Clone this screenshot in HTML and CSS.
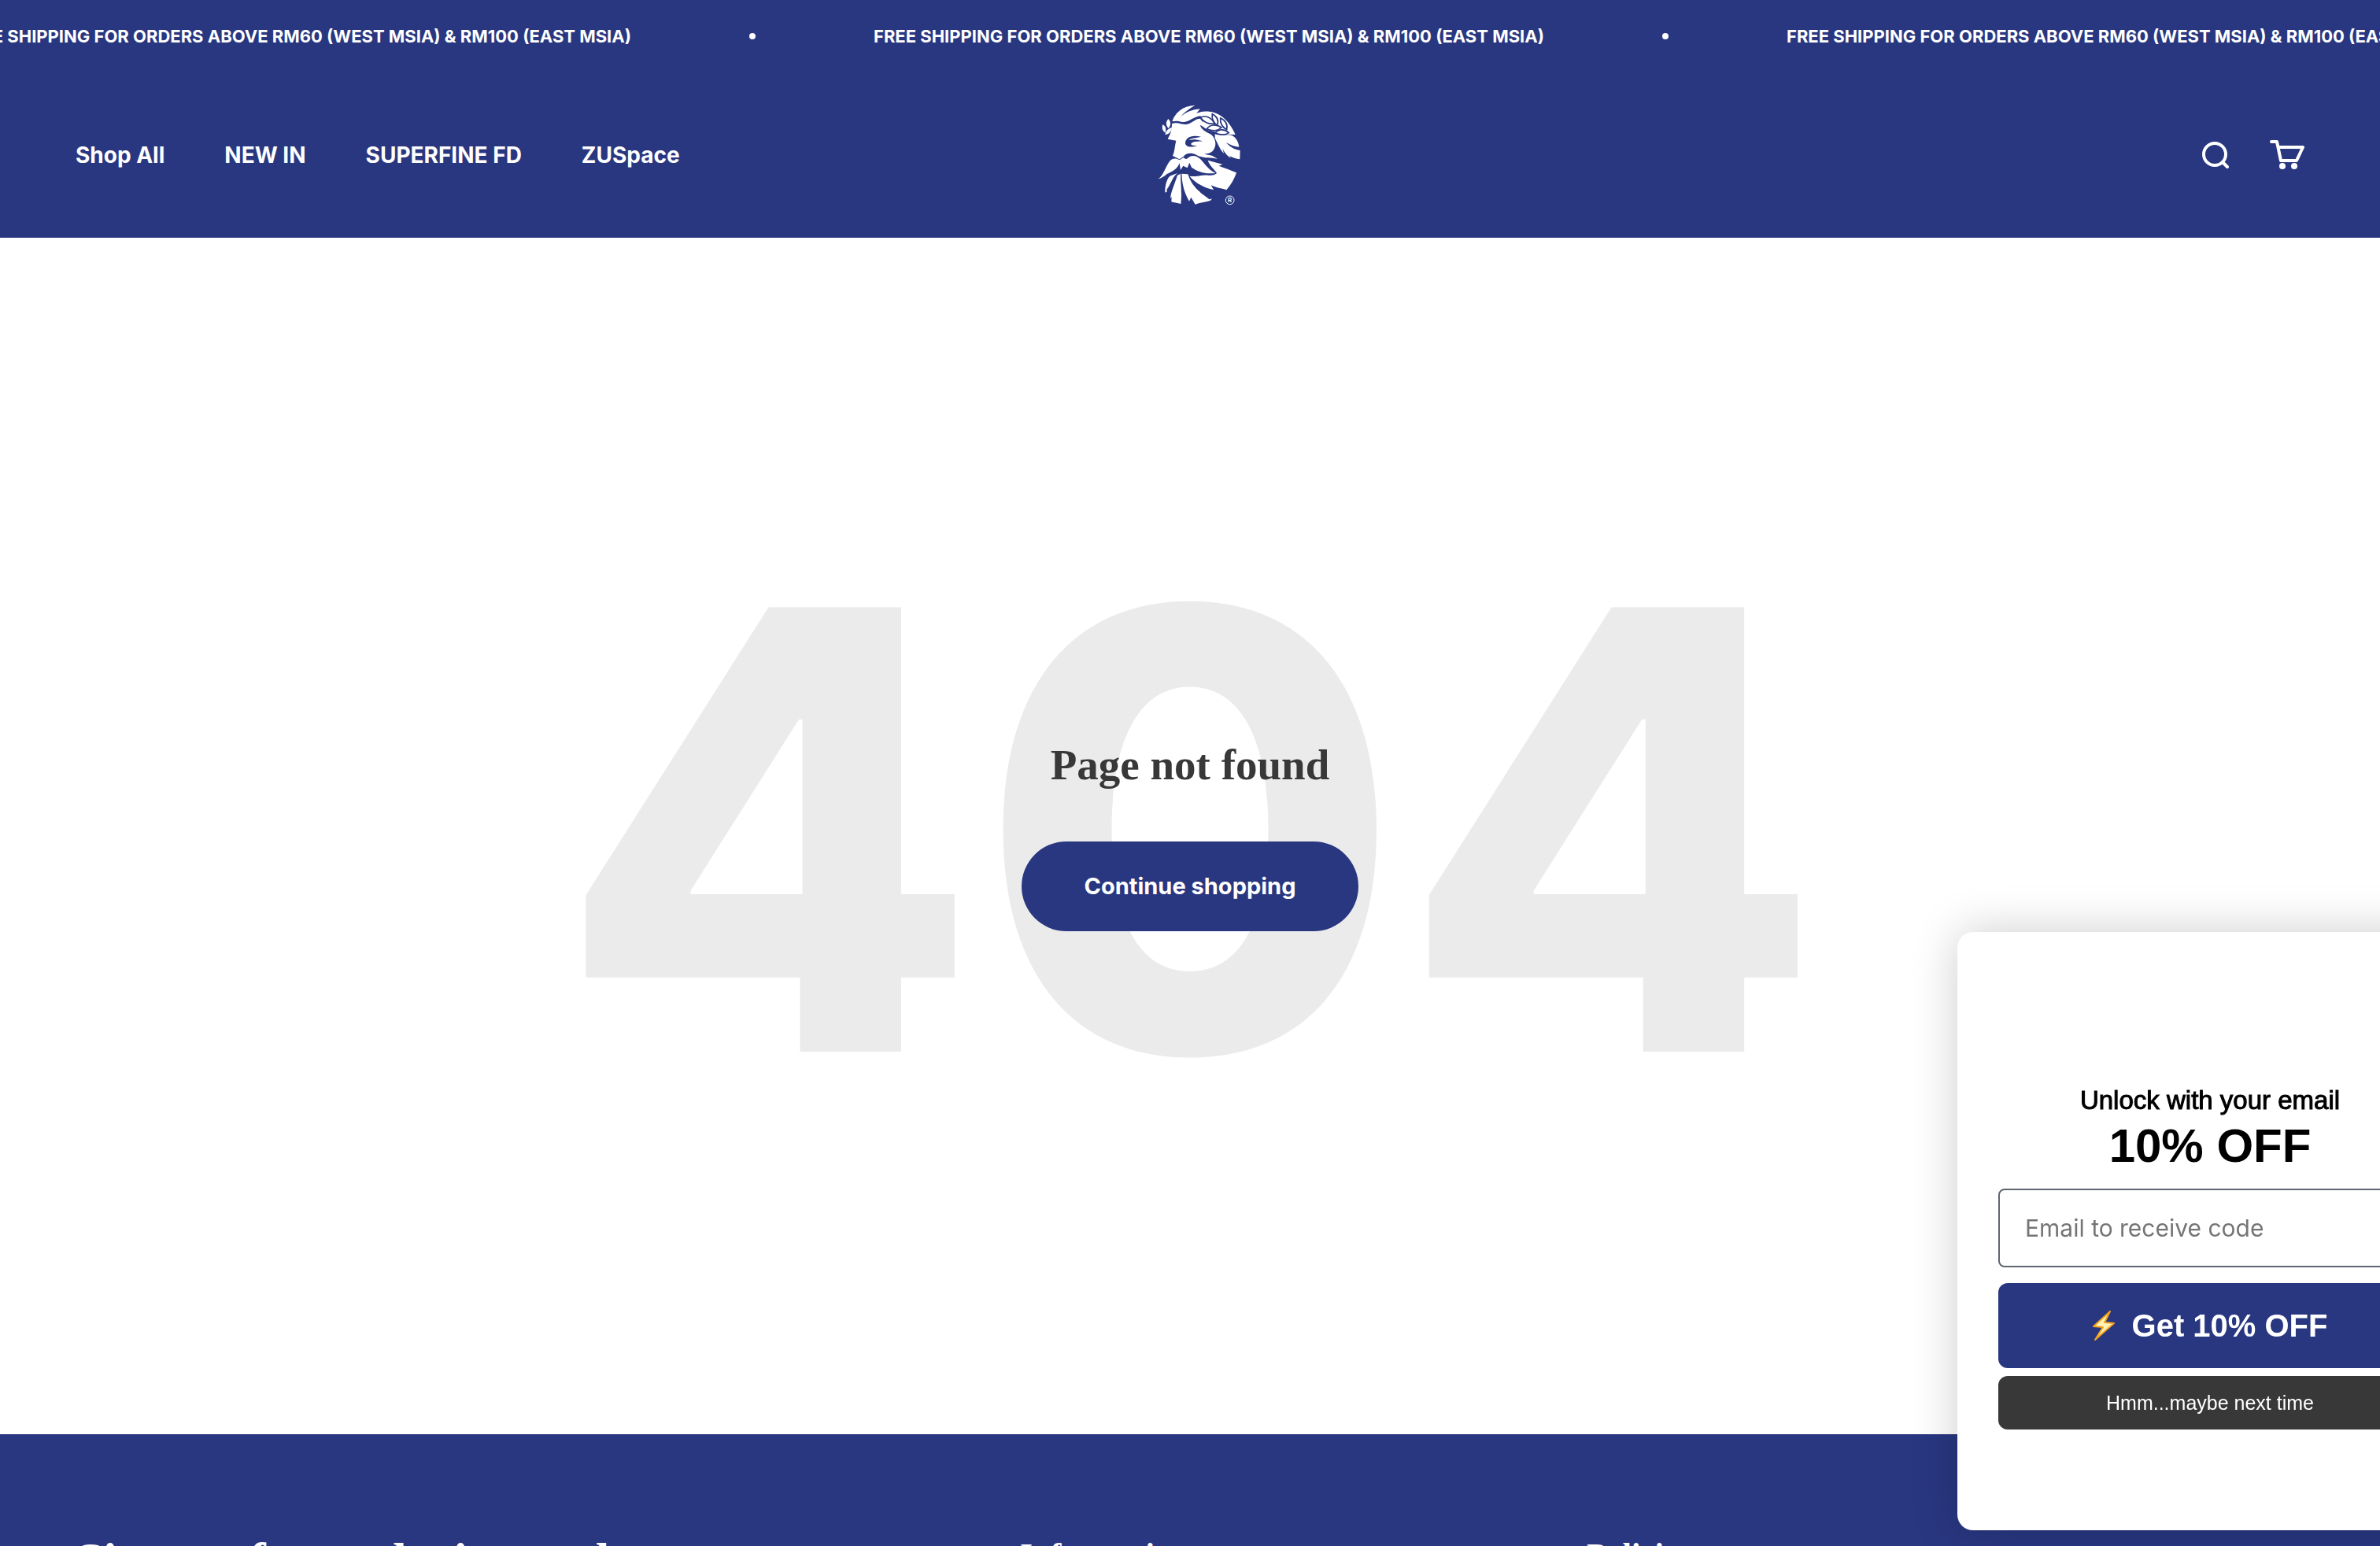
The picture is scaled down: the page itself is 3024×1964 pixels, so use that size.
FILE: index.html
```html
<!DOCTYPE html>
<html lang="en">
<head>
  <meta charset="UTF-8" />
  <meta name="viewport" content="width=device-width, initial-scale=1.0" />
  <title>404 Not Found</title>
  <link rel="stylesheet" href="styles.css">
</head>
<body>
  <div class="announcement">
    <div class="marquee">
      <span>FREE SHIPPING FOR ORDERS ABOVE RM60 (WEST MSIA) &amp; RM100 (EAST MSIA)</span>
      <i class="dot"></i>
      <span>FREE SHIPPING FOR ORDERS ABOVE RM60 (WEST MSIA) &amp; RM100 (EAST MSIA)</span>
      <i class="dot"></i>
      <span>FREE SHIPPING FOR ORDERS ABOVE RM60 (WEST MSIA) &amp; RM100 (EAST MSIA)</span>
    </div>
  </div>

  <header class="header">
    <nav class="nav">
      <a href="#">Shop All</a>
      <a href="#">NEW IN</a>
      <a href="#">SUPERFINE FD</a>
      <a href="#">ZUSpace</a>
    </nav>

    <a href="#" class="logo" aria-label="Home">
      <svg viewBox="21 70 390 390" width="130" height="130">
        <g fill="#fff">
          <!-- hair -->
          <path d="M148 137C158 106 186 77 236 75C214 86 190 106 178 121C200 101 226 91 254 89C250 95 246 100 241 105C290 88 352 102 389 187L352 186L284 170L256 150L268 140L256 116C230 118 210 142 186 139C170 134 158 134 148 137Z"/>
          <!-- face -->
          <path d="M147 146C170 136 186 152 206 147C226 142 236 126 255 126C264 142 278 146 286 154L254 152C264 174 282 178 298 188C316 204 318 232 303 249C294 258 282 259 270 261L300 267L321 279C290 274 262 278 240 264C222 255 200 256 192 270L176 281L150 268C158 250 158 228 163 210L131 204C140 186 146 176 147 146Z"/>
          <!-- hair behind the ear -->
          <path d="M311 185C336 194 358 184 376 190C392 199 401 214 403 234C384 232 368 226 354 216C366 232 384 243 407 247L406 281C392 279 378 274 366 268L372 276C356 268 346 252 340 240L345 259C332 246 322 224 311 200Z"/>
          <!-- moustache -->
          <path d="M94 356C114 346 124 306 138 289C148 277 162 276 176 284L192 274C206 290 206 268 228 268C262 268 268 312 313 334C270 338 246 328 222 312L214 294L206 314L190 306L180 322L176 296C168 318 146 330 128 337C118 346 106 354 94 356Z"/>
          <!-- beard -->
          <path d="M284 285L340 300L326 306C350 316 372 322 393 332C384 358 374 376 355 398C340 392 322 392 296 380L306 397C270 390 234 370 214 345C242 350 262 338 286 342C300 343 314 340 318 333C308 318 292 308 284 285Z"/>
          <path d="M184 336L208 338C218 370 238 396 272 420L290 434L300 431L294 438C276 444 252 446 236 453L220 426L213 441C198 414 186 384 184 336Z"/>
          <path d="M180 336C180 372 186 410 181 451C168 448 154 446 145 443L146 424L141 430C144 402 156 380 168 342Z"/>
          <path d="M168 334C146 352 144 376 127 397L129 404L121 408C120 382 128 352 142 344Z"/>
          <!-- left leaves -->
          <path d="M133 127C144 138 144 150 134 163C122 150 124 138 133 127Z"/>
          <path d="M112 149C124 154 126 166 122 180C110 172 108 162 112 149Z"/>
          <path d="M148 160C144 176 136 186 121 187C124 174 132 164 148 160Z"/>
        </g>
        <!-- wreath -->
        <g fill="#fff" stroke="#293780" stroke-width="5">
          <path d="M256 122C276 112 298 122 310 146C286 148 268 140 256 122Z"/>
          <path d="M301 108C320 118 326 134 320 152C306 142 298 126 301 108Z"/>
          <path d="M280 165C294 146 318 148 336 160C318 176 300 174 280 165Z"/>
          <path d="M332 124C350 132 360 148 356 168C338 158 330 142 332 124Z"/>
          <path d="M312 180C328 164 348 166 364 180C348 192 330 188 312 180Z"/>
        </g>
        <path fill="#293780" d="M258 195C230 202 218 200 213 208C228 204 248 206 264 213C242 212 228 214 222 219C216 225 224 229 243 229C222 237 200 235 198 220C198 198 222 186 258 195Z"/>
        <circle cx="368" cy="437" r="16" fill="none" stroke="#fff" stroke-width="3"/>
        <text class="mark" x="368" y="446" text-anchor="middle">R</text>
      </svg>
    </a>

    <div class="actions">
      <a href="#" aria-label="Search">
        <svg viewBox="0 0 34 34" width="34" height="34" fill="none" stroke="#fff" stroke-width="4" stroke-linecap="round">
          <circle cx="16" cy="16" r="14"/>
          <path d="M27 27L32 32"/>
        </svg>
      </a>
      <a href="#" aria-label="Cart">
        <svg viewBox="0 0 44 38" width="44" height="38" fill="none" stroke="#fff" stroke-width="4" stroke-linecap="round" stroke-linejoin="round">
          <path d="M2 2H9L14 26H34L42 9H11"/>
          <circle cx="16" cy="33" r="4" fill="#fff" stroke="none"/>
          <circle cx="31" cy="33" r="4" fill="#fff" stroke="none"/>
        </svg>
      </a>
    </div>
  </header>

  <main class="not-found">
    <p class="code">404</p>
    <div class="message">
      <h1>Page not found</h1>
      <a href="#" class="button">Continue shopping</a>
    </div>
  </main>

  <footer class="footer">
    <h2>Sign up for exclusive updates</h2>
    <h3>Information</h3>
    <h3>Policies</h3>
  </footer>

  <form class="popup">
    <label for="email">Unlock with your email</label>
    <p class="offer">10% OFF</p>
    <input type="email" id="email" placeholder="Email to receive code" />
    <button type="button" class="claim">
      <svg viewBox="0 0 28 38" width="28" height="38">
        <path d="M22 1L1 20L13 21L3 37L27 16L15 15Z" fill="#fff3b8" stroke="#f5a31c" stroke-width="2" stroke-linejoin="round"/>
      </svg>
      Get 10% OFF
    </button>
    <button type="button" class="dismiss">Hmm...maybe next time</button>
  </form>
</body>
</html>
```

FILE: styles.css
```css
* {
  box-sizing: border-box;
}
html {
  overflow: hidden;
}
body {
  margin: 0;
  overflow: hidden;
  font-family: Inter, "Open Sans", sans-serif;
  background: #fff;
  color: #383838;
}
h1, h2, h3, p {
  margin: 0;
}
a {
  color: inherit;
  text-decoration: none;
}
svg {
  display: block;
}

/* announcement bar */
.announcement {
  overflow: hidden;
  background: #293780;
  color: #fff;
}
.marquee {
  display: flex;
  align-items: center;
  gap: 150px;
  height: 92px;
  margin-left: -50px;
  font-size: 22px;
  font-weight: 700;
  white-space: nowrap;
}
.marquee span {
  flex: none;
}
.dot {
  flex: none;
  width: 8px;
  height: 8px;
  border-radius: 50%;
  background: #fff;
}

/* header */
.header {
  display: grid;
  grid-template-columns: 1fr auto 1fr;
  align-items: center;
  padding: 40px 96px;
  background: #293780;
  color: #fff;
}
.nav {
  display: flex;
  gap: 76px;
  font-size: 28px;
  font-weight: 700;
}
.mark {
  font-size: 24px;
  font-weight: 600;
  fill: #fff;
}
.actions {
  display: flex;
  align-items: center;
  justify-content: flex-end;
  gap: 52px;
}

/* 404 */
.not-found {
  display: grid;
  place-items: center;
  padding: 364px 96px 366px;
}
.code,
.message {
  grid-area: 1 / 1;
}
.code {
  margin-bottom: 14px;
  font-size: 776px;
  font-weight: 800;
  line-height: 1;
  color: #ebebeb;
}
.message {
  display: flex;
  flex-direction: column;
  align-items: center;
  gap: 64px;
}
h1, h2, h3 {
  font-family: "Liberation Serif", serif;
  font-weight: 700;
  line-height: 1.2;
}
h1 {
  font-size: 55px;
}
.button {
  padding: 40px 80px;
  border-radius: 60px;
  background: #293780;
  color: #fff;
  font-size: 29px;
  font-weight: 700;
  line-height: 34px;
}

/* footer */
.footer {
  display: grid;
  grid-template-columns: 25fr 15fr 19fr;
  padding: 124px 96px;
  background: #293780;
  color: #fff;
}
h2 {
  font-size: 63px;
}
h3 {
  padding-top: 4px;
  font-size: 41px;
}

/* discount popup */
.popup {
  position: fixed;
  right: -105px;
  bottom: 20px;
  display: flex;
  flex-direction: column;
  width: 642px;
  padding: 192px 52px 128px;
  border-radius: 20px;
  background: #fff;
  box-shadow: 0 0 60px rgba(0, 0, 0, 0.2);
  color: #000;
  font-family: "Liberation Sans", sans-serif;
  text-align: center;
}
.popup label {
  font-size: 33px;
  line-height: 44px;
  -webkit-text-stroke: 1px #000;
}
.offer {
  margin-bottom: 18px;
  font-size: 60px;
  font-weight: 700;
  line-height: 72px;
}
.popup input {
  height: 100px;
  margin-bottom: 20px;
  padding: 0 32px;
  border: 2px solid #5f6670;
  border-radius: 8px;
  font-family: Inter, sans-serif;
  font-size: 30px;
}
.popup input::placeholder {
  color: #757575;
}
.popup button {
  border: none;
  border-radius: 12px;
  color: #fff;
  font-family: inherit;
  cursor: pointer;
}
.claim {
  display: flex;
  align-items: center;
  justify-content: center;
  gap: 22px;
  height: 108px;
  margin-bottom: 10px;
  background: #293780;
  font-size: 40px;
  font-weight: 700;
}
.dismiss {
  height: 68px;
  background: #383838;
  font-size: 25px;
}
```
